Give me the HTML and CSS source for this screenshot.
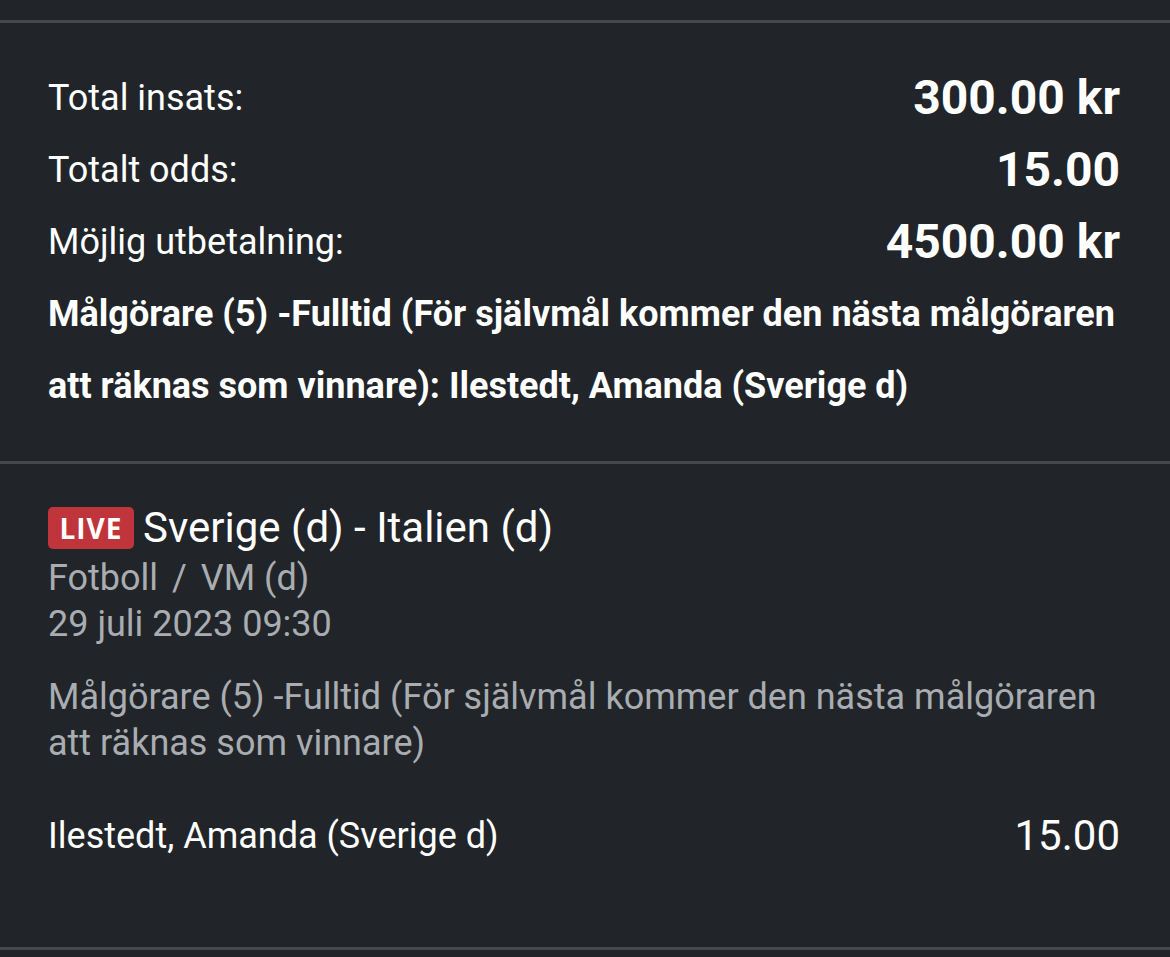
FILE: index.html
```html
<!DOCTYPE html>
<html lang="sv">
<head>
<meta charset="utf-8">
<title>Kupong</title>
<link rel="stylesheet" href="styles.css">
</head>
<body>
<div class="page">
  <div class="divider"></div>
  <section class="summary">
    <div class="row">
      <span class="label">Total insats:</span>
      <span class="value">300.00 kr</span>
    </div>
    <div class="row">
      <span class="label">Totalt odds:</span>
      <span class="value">15.00</span>
    </div>
    <div class="row">
      <span class="label">Möjlig utbetalning:</span>
      <span class="value">4500.00 kr</span>
    </div>
    <p class="selection">Målgörare (5) -Fulltid (För självmål kommer den nästa målgöraren att räknas som vinnare): Ilestedt, Amanda (Sverige d)</p>
  </section>
  <div class="divider"></div>
  <section class="event">
    <div class="event-head">
      <span class="live">LIVE</span>
      <span class="match">Sverige (d) - Italien (d)</span>
    </div>
    <div class="meta">Fotboll <span class="sep">/</span> VM (d)</div>
    <div class="meta">29 juli 2023 09:30</div>
    <p class="market">Målgörare (5) -Fulltid (För självmål kommer den nästa målgöraren att räknas som vinnare)</p>
    <div class="pick">
      <span class="pick-name">Ilestedt, Amanda (Sverige d)</span>
      <span class="pick-odds">15.00</span>
    </div>
  </section>
  <div class="divider"></div>
</div>
</body>
</html>
```

FILE: styles.css
```css
html, body {
  margin: 0;
  padding: 0;
  background: #212529;
}

body {
  font-family: Roboto, "Liberation Sans", sans-serif;
  color: #ffffff;
}

.page {
  width: 1170px;
  height: 957px;
  padding-top: 20px;
  box-sizing: border-box;
  overflow: hidden;
}

.divider {
  height: 3px;
  background: #45484c;
}

.summary {
  padding: 39px 50px 39px 48px;
}

.row {
  height: 72px;
  display: flex;
  align-items: center;
  justify-content: space-between;
}

.label {
  font-size: 36px;
  line-height: 1;
}

.value {
  font-size: 48px;
  font-weight: 700;
  line-height: 1;
}

.selection {
  margin: 0;
  font-size: 36px;
  font-weight: 700;
  line-height: 72px;
}

.event {
  padding: 42px 50px 88px 48px;
}

.event-head {
  display: flex;
  align-items: center;
  gap: 9px;
  height: 44px;
}

.live {
  display: flex;
  align-items: center;
  justify-content: center;
  width: 86px;
  height: 42px;
  box-sizing: border-box;
  background: #c0353b;
  border-radius: 5px;
  font-family: "Open Sans", sans-serif;
  font-weight: 700;
  font-size: 28px;
  letter-spacing: 1px;
  color: #ffffff;
}

.match {
  font-size: 42px;
  line-height: 44px;
}

.meta {
  font-size: 36px;
  line-height: 46px;
  color: #a9adb1;
}

.sep {
  margin: 0 5px;
}

.event-head + .meta {
  margin-top: 5px;
}

.market {
  margin: 27px 0 0;
  font-size: 36px;
  line-height: 46px;
  color: #a9adb1;
}

.pick {
  margin-top: 47px;
  height: 46px;
  display: flex;
  align-items: center;
  justify-content: space-between;
}

.pick-name {
  font-size: 36px;
  line-height: 1;
}

.pick-odds {
  font-size: 42px;
  line-height: 1;
}
```
